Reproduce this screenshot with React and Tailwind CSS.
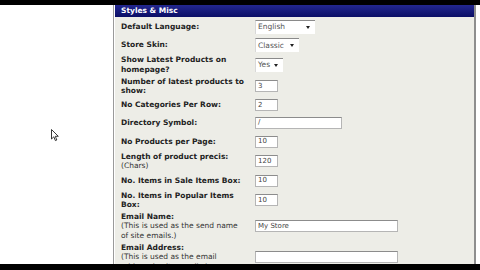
import React from 'react';

const font = { fontFamily: '"DejaVu Sans", Verdana, sans-serif' };

function Select({ value, width }) {
  return (
    <div className={`flex h-[14px] items-center justify-between border-t border-t-[#8a8a8a] border-l border-l-[#d8d8d8] bg-white pl-[2px] pr-[5px] text-[7.5px] text-[#555] ${width}`}>
      <span>{value}</span>
      <span className="h-0 w-0 border-x-[2.5px] border-t-[3px] border-x-transparent border-t-[#222]" />
    </div>
  );
}

function Input({ value, width }) {
  return (
    <div className={`flex h-[12px] items-center border border-[#b5b5b5] border-t-[#8c8c8c] bg-white pl-[2px] text-[7px] text-[#444] ${width}`}>
      {value}
    </div>
  );
}

function Row({ h, label, note, children }) {
  return (
    <div className={`flex items-center ${h}`}>
      <div className="w-[134px] shrink-0 leading-[9.5px]">
        <div className="text-[7.5px] font-bold text-[#222]">{label}</div>
        {note && <div className="text-[7.5px] text-[#333]">{note}</div>}
      </div>
      <div className="flex-1">{children}</div>
    </div>
  );
}

const br = (a, b) => (
  <>
    {a}
    <br />
    {b}
  </>
);

export default function App() {
  return (
    <div className="flex h-[270px] w-[480px] flex-col overflow-hidden bg-white" style={font}>
      <div className="h-[5px] shrink-0 bg-black" />
      <div className="flex min-h-0 flex-1 overflow-hidden">
        {/* left blank area with cursor */}
        <div className="relative w-[113px] shrink-0">
          <svg className="absolute left-[51px] top-[124px]" width="8" height="13" viewBox="0 0 8 13">
            <path d="M0.5 0.5 L0.5 10 L2.8 7.8 L4.4 11.6 L5.8 11 L4.3 7.3 L7.3 7.3 Z" fill="#fff" stroke="#222" strokeWidth="0.9" />
          </svg>
        </div>
        <div className="w-px shrink-0 bg-[#9a9a9a]" />
        <div className="w-px shrink-0 bg-white" />
        <div className="flex w-[359px] shrink-0 flex-col bg-[#edede7]">
          <div className="flex h-[12px] shrink-0 items-center bg-gradient-to-b from-[#23278f] to-[#0b0e66] pl-[6px] text-[7.5px] font-bold text-white">
            Styles &amp; Misc
          </div>
          <div className="flex flex-col pl-[6px]">
            <Row h="h-[19px]" label="Default Language:">
              <Select value="English" width="w-[60px]" />
            </Row>
            <Row h="h-[18px]" label="Store Skin:">
              <Select value="Classic" width="w-[44px]" />
            </Row>
            <Row h="h-[21px]" label={br('Show Latest Products on', 'homepage?')}>
              <Select value="Yes" width="w-[28px]" />
            </Row>
            <Row h="h-[22px]" label={br('Number of latest products to', 'show:')}>
              <Input value="3" width="w-[23px]" />
            </Row>
            <Row h="h-[16px]" label="No Categories Per Row:">
              <Input value="2" width="w-[23px]" />
            </Row>
            <Row h="h-[19px]" label="Directory Symbol:">
              <Input value="/" width="w-[87px]" />
            </Row>
            <Row h="h-[19px]" label="No Products per Page:">
              <Input value="10" width="w-[23px]" />
            </Row>
            <Row h="h-[20px]" label="Length of product precis:" note="(Chars)">
              <Input value="120" width="w-[23px]" />
            </Row>
            <Row h="h-[19px]" label="No. Items in Sale Items Box:">
              <Input value="10" width="w-[23px]" />
            </Row>
            <Row h="h-[20px]" label={br('No. Items in Popular Items', 'Box:')}>
              <Input value="10" width="w-[23px]" />
            </Row>
            <Row h="h-[32px]" label="Email Name:" note={br('(This is used as the send name', 'of site emails.)')}>
              <Input value="My Store" width="w-[143px]" />
            </Row>
            <Row h="h-[30px]" label="Email Address:" note={br('(This is used as the email', 'address in site emails.)')}>
              <Input value="" width="w-[143px]" />
            </Row>
          </div>
        </div>
        <div className="w-[2px] shrink-0 bg-[#8e8e8e]" />
        <div className="flex-1 bg-white" />
      </div>
      <div className="h-[6px] shrink-0 bg-black" />
    </div>
  );
}
